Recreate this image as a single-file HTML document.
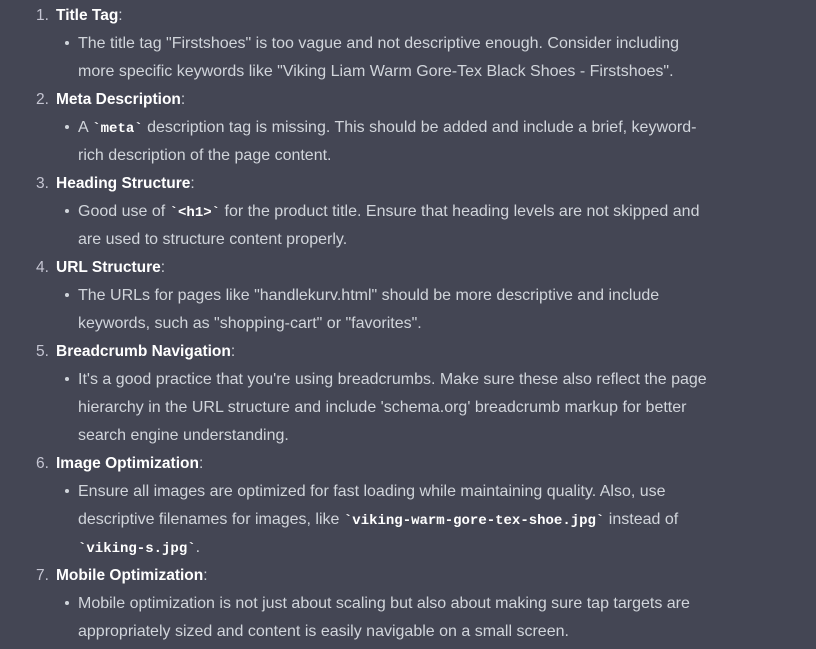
<!DOCTYPE html>
<html><head><meta charset="utf-8"><style>
html,body{margin:0;padding:0;background:#444654;width:816px;height:649px;overflow:hidden}
body{font-family:"Liberation Sans",sans-serif;font-size:16px;color:#d1d5db;position:relative}
.l{position:absolute;height:28px;line-height:28px;white-space:nowrap}
.n{left:36px;font-size:15.5px}
.n b{color:#fff;font-weight:bold}
.n span.num{color:#c5c5d2;display:inline-block;width:20px}
.t{left:78px}
.b:before{content:"";position:absolute;left:-13px;top:11px;width:4px;height:4px;border-radius:2px;background:#d1d5db}
code{font-family:"Liberation Mono",monospace;font-weight:bold;color:#fff;font-size:14px}
</style></head><body>
<div class="l n" style="top:2px"><span class="num">1.</span><b>Title Tag</b>:</div>
<div class="l t b" style="top:30px">The title tag "Firstshoes" is too vague and not descriptive enough. Consider including</div>
<div class="l t" style="top:58px;">more specific keywords like "Viking Liam Warm Gore-Tex Black Shoes - Firstshoes".</div>
<div class="l n" style="top:86px"><span class="num">2.</span><b>Meta Description</b>:</div>
<div class="l t b" style="top:114px">A <code>`meta`</code> description tag is missing. This should be added and include a brief, keyword-</div>
<div class="l t" style="top:142px">rich description of the page content.</div>
<div class="l n" style="top:170px"><span class="num">3.</span><b>Heading Structure</b>:</div>
<div class="l t b" style="top:198px">Good use of <code>`&lt;h1&gt;`</code> for the product title. Ensure that heading levels are not skipped and</div>
<div class="l t" style="top:226px">are used to structure content properly.</div>
<div class="l n" style="top:254px"><span class="num">4.</span><b>URL Structure</b>:</div>
<div class="l t b" style="top:282px">The URLs for pages like "handlekurv.html" should be more descriptive and include</div>
<div class="l t" style="top:310px">keywords, such as "shopping-cart" or "favorites".</div>
<div class="l n" style="top:338px"><span class="num">5.</span><b>Breadcrumb Navigation</b>:</div>
<div class="l t b" style="top:366px">It's a good practice that you're using breadcrumbs. Make sure these also reflect the page</div>
<div class="l t" style="top:394px">hierarchy in the URL structure and include 'schema.org' breadcrumb markup for better</div>
<div class="l t" style="top:422px">search engine understanding.</div>
<div class="l n" style="top:450px"><span class="num">6.</span><b>Image Optimization</b>:</div>
<div class="l t b" style="top:478px">Ensure all images are optimized for fast loading while maintaining quality. Also, use</div>
<div class="l t" style="top:506px">descriptive filenames for images, like <code>`viking-warm-gore-tex-shoe.jpg`</code> instead of</div>
<div class="l t" style="top:534px"><code>`viking-s.jpg`</code>.</div>
<div class="l n" style="top:562px"><span class="num">7.</span><b>Mobile Optimization</b>:</div>
<div class="l t b" style="top:590px">Mobile optimization is not just about scaling but also about making sure tap targets are</div>
<div class="l t" style="top:618px">appropriately sized and content is easily navigable on a small screen.</div>
</body></html>
